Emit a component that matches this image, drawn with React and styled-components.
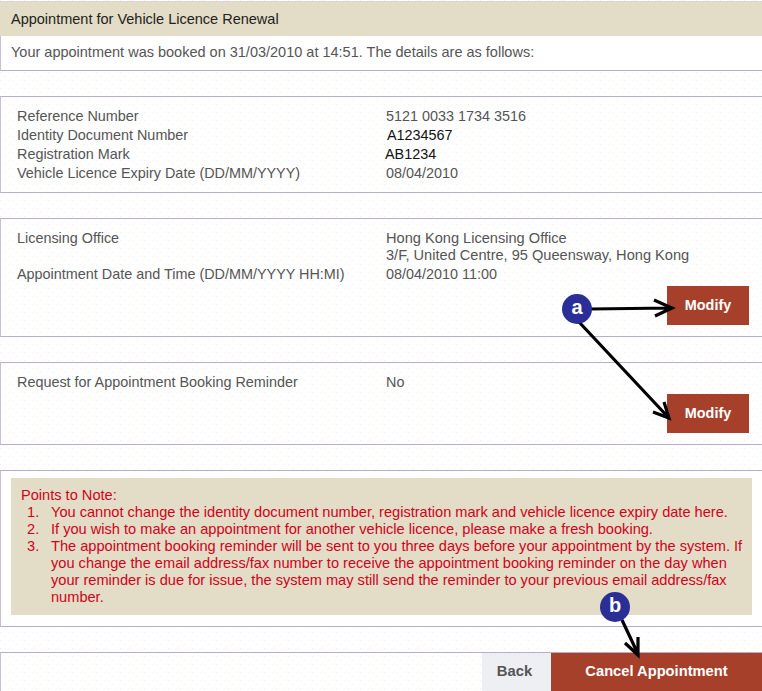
import React from 'react';
import styled, { createGlobalStyle } from 'styled-components';

const GlobalStyle = createGlobalStyle`
  html, body {
    margin: 0;
    padding: 0;
    background: #fff;
  }
  body {
    font-family: "Liberation Sans", Arial, sans-serif;
    font-size: 14.4px;
    color: #555;
  }
`;

// the reference is a dithered gif, the faint page speckle is built from 1px dots
const dot = (colour) => `conic-gradient(from 270deg at 1px 1px, ${colour} 0 25%, transparent 0)`;

const Page = styled.div`
  position: relative;
  width: 762px;
  height: 691px;
  overflow: hidden;
  padding-top: 1px;
  box-sizing: border-box;
  background-color: #fefefe;
  background-image: ${dot('#f8eaf6')}, ${dot('#e8f9fb')}, ${dot('#fbf9e0')};
  background-size: 12px 8px;
  background-position: 0 0, 4px 4px, 8px 0;
`;

const Title = styled.div`
  height: 35px;
  line-height: 34px;
  padding-left: 11px;
  box-sizing: border-box;
  border-top: 1px solid #d9d5d0;
  background: #e3dcc6;
  font-size: 14.5px;
  color: #222;
`;

const Intro = styled.div`
  height: 35px;
  line-height: 33px;
  padding-left: 10px;
  box-sizing: border-box;
  background: #fff;
  border-left: 1px solid #c9bfd0;
  border-bottom: 1px solid #b9aec4;
  font-size: 14.5px;
  color: #555;
  margin-bottom: 25px;
`;

const Panel = styled.section`
  box-sizing: border-box;
  height: ${p => p.$height}px;
  margin-bottom: 25px;
  padding: ${p => p.$pad || '10px 0 0 16px'};
  border-top: 1px solid #b9aec4;
  border-bottom: 1px solid #b9aec4;
  border-left: 1px solid #c9bfd0;
  background: ${p => p.$white ? '#fff' : 'transparent'};
`;

const Row = styled.div`
  display: grid;
  grid-template-columns: 369px 1fr;
  line-height: 19px;
`;

const Value = styled.div`
  margin-left: ${p => p.$shift || 0}px;
  color: ${p => p.$typed ? '#111' : '#555'};
`;

const Address = styled.div`
  padding-top: 1px;
  line-height: 17px;
  font-size: 14.6px;
  margin-bottom: 1px;
`;

const Actions = styled.div`
  display: flex;
  justify-content: flex-end;
  padding-right: 13px;
  margin-top: ${p => p.$top}px;
`;

const ModifyButton = styled.button`
  width: 82px;
  height: 39px;
  border: 0;
  padding: 0 0 1px;
  background: #a6402b;
  color: #fff;
  font-family: "Liberation Sans", Arial, sans-serif;
  font-size: 14.4px;
  font-weight: bold;
`;

const Note = styled.div`
  height: 137px;
  width: 741px;
  box-sizing: border-box;
  padding: 9px 0 0 10px;
  background: #e3dcc6;
  color: #d0021b;
  font-size: 14.6px;
  line-height: 17px;
`;

const NoteList = styled.ol`
  margin: 0;
  padding: 0 4px 0 6px;
  list-style: none;
  counter-reset: note;
`;

const NoteItem = styled.li`
  display: grid;
  grid-template-columns: 24px 1fr;
  counter-increment: note;

  &::before {
    content: counter(note) ".";
  }
`;

const Footer = styled.div`
  display: flex;
  justify-content: flex-end;
  box-sizing: border-box;
  height: 39px;
  border-top: 1px solid #b9aec4;
  border-left: 1px solid #c9bfd0;
`;

const BackButton = styled.button`
  width: 69px;
  border: 0;
  padding: 0 4px 2px 0;
  background: #eeeff3;
  color: #555;
  font-family: "Liberation Sans", Arial, sans-serif;
  font-size: 14.8px;
  font-weight: bold;
`;

const CancelButton = styled.button`
  width: 211px;
  border: 0;
  padding: 0 0 2px;
  background: #a6402b;
  color: #fff;
  font-family: "Liberation Sans", Arial, sans-serif;
  font-size: 14.7px;
  font-weight: bold;
`;

const Arrows = styled.svg`
  position: absolute;
  left: 0;
  top: 0;
  pointer-events: none;
`;

const Badge = styled.div`
  position: absolute;
  left: ${p => p.$x}px;
  top: ${p => p.$y}px;
  width: 30px;
  height: 30px;
  border-radius: 50%;
  background: #2a2e96;
  color: #fff;
  font-size: 20px;
  font-weight: bold;
  line-height: 27px;
  text-align: center;
`;

export default function App() {
  return (
    <Page>
      <GlobalStyle />
      <Title>Appointment for Vehicle Licence Renewal</Title>
      <Intro>Your appointment was booked on 31/03/2010 at 14:51. The details are as follows:</Intro>

      <Panel $height={97}>
        <Row><div>Reference Number</div><Value>5121 0033 1734 3516</Value></Row>
        <Row><div>Identity Document Number</div><Value $typed $shift={1}>A1234567</Value></Row>
        <Row><div>Registration Mark</div><Value $typed $shift={-1}>AB1234</Value></Row>
        <Row><div>Vehicle Licence Expiry Date (DD/MM/YYYY)</div><Value>08/04/2010</Value></Row>
      </Panel>

      <Panel $height={119}>
        <Row>
          <div>Licensing Office</div>
          <Value><Address>Hong Kong Licensing Office<br />3/F, United Centre, 95 Queensway, Hong Kong</Address></Value>
        </Row>
        <Row><div>Appointment Date and Time (DD/MM/YYYY HH:MI)</div><Value>08/04/2010 11:00</Value></Row>
        <Actions $top={2}><ModifyButton>Modify</ModifyButton></Actions>
      </Panel>

      <Panel $height={83}>
        <Row><div>Request for Appointment Booking Reminder</div><Value>No</Value></Row>
        <Actions $top={2}><ModifyButton>Modify</ModifyButton></Actions>
      </Panel>

      <Panel $height={157} $white $pad="7px 0 0 10px">
        <Note>
          Points to Note:
          <NoteList>
            <NoteItem><span>You cannot change the identity document number, registration mark and vehicle licence expiry date here.</span></NoteItem>
            <NoteItem><span>If you wish to make an appointment for another vehicle licence, please make a fresh booking.</span></NoteItem>
            <NoteItem><span>The appointment booking reminder will be sent to you three days before your appointment by the system. If you change the email address/fax number to receive the appointment booking reminder on the day when your reminder is due for issue, the system may still send the reminder to your previous email address/fax number.</span></NoteItem>
          </NoteList>
        </Note>
      </Panel>

      <Footer>
        <BackButton>Back</BackButton>
        <CancelButton>Cancel Appointment</CancelButton>
      </Footer>

      <Arrows width="762" height="691" viewBox="0 0 762 691" fill="none" stroke="#000" strokeWidth="3.2">
        <path d="M590 309 L671 308 M654 300 L672 308 L655 316" />
        <path d="M579 322 L668 417 M664 402 L669 418 L653 412" />
        <path d="M622 620 L638 654 M625 643 L638 655 L638 637" />
      </Arrows>
      <Badge $x={562} $y={294}>a</Badge>
      <Badge $x={600} $y={592}>b</Badge>
    </Page>
  );
}
